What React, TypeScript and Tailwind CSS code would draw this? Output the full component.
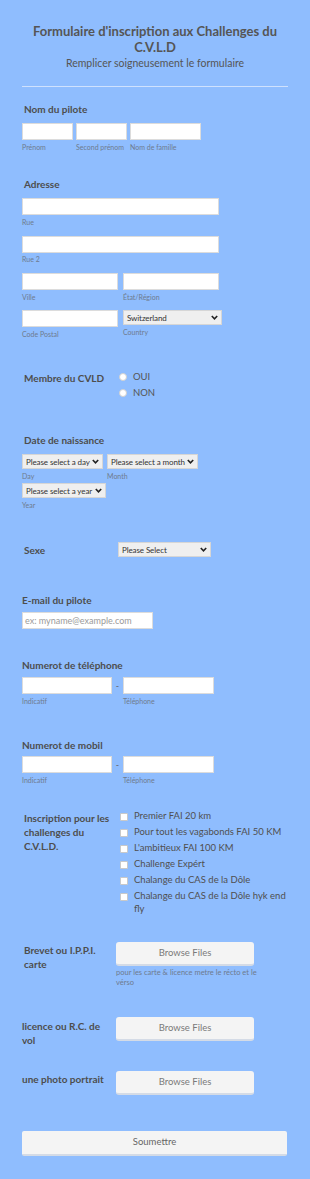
import React from "react";

const F = { fontFamily: "Lato, 'Open Sans', sans-serif" };

function Chevron() {
  return (
    <svg width="7" height="5" viewBox="0 0 7 5" className="shrink-0">
      <path d="M0.8 1 L3.5 3.8 L6.2 1" fill="none" stroke="#222" strokeWidth="1.6" />
    </svg>
  );
}

function Input({ w, placeholder }: { w: string; placeholder?: string }) {
  return (
    <div className={`${w} h-[17px] bg-white border border-[#dcdcdc] flex items-center px-[2px] text-[9px] text-[#9a9a9a]`}>
      {placeholder}
    </div>
  );
}

function Select({ w, text, h = "h-[15px]" }: { w: string; text: string; h?: string }) {
  return (
    <div className={`${w} ${h} bg-[#efefef] border border-[#d6d6d6] flex items-center justify-between gap-[2px] pl-[3px] pr-[3px] text-[8px] tracking-[-0.1px] text-[#333]`}>
      <span className="whitespace-nowrap">{text}</span>
      <Chevron />
    </div>
  );
}

function Sub({ children, className = "" }: { children: React.ReactNode; className?: string }) {
  return <div className={`text-[7px] leading-[10px] text-[#6e7b8e] ${className}`}>{children}</div>;
}

function Label({ children, className = "" }: { children: React.ReactNode; className?: string }) {
  return <div className={`text-[10px] leading-[14px] font-bold text-[#4d4d4d] ${className}`}>{children}</div>;
}

function Browse() {
  return (
    <div className="w-[138px] h-[24px] bg-[#f4f4f4] rounded-[3px] border-b-2 border-[#d4dbe6] flex items-center justify-center text-[9.5px] text-[#7a7a7a]">
      Browse Files
    </div>
  );
}

function Check({ children }: { children: React.ReactNode }) {
  return (
    <div className="flex items-start gap-[6px] text-[9.5px] leading-[12.5px] text-[#4f4f4f]">
      <div className="w-[8px] h-[8px] mt-[2.5px] bg-white border border-[#c9c9c9] rounded-[1px] shrink-0" />
      <div>{children}</div>
    </div>
  );
}

export default function App() {
  return (
    <div style={F} className="w-[310px] min-h-[1179px] bg-[#8fbdfe] px-[22px] pt-[23px] pb-[23px]">
      <div className="text-center text-[#555] font-bold text-[13px] leading-[16px]">
        Formulaire d'inscription aux Challenges du
        <br />
        C.V.L.D
      </div>
      <div className="text-center text-[#555] text-[10.5px] leading-[12px] mt-[2px]">Remplicer soigneusement le formulaire</div>
      <div className="h-px bg-[#cfe1fd] mt-[17px]" />

      {/* Nom du pilote */}
      <Label className="mt-[15px] ml-[2px]">Nom du pilote</Label>
      <div className="flex gap-[3px] mt-[7px]">
        <div>
          <Input w="w-[51px]" />
          <Sub className="mt-[2px]">Prénom</Sub>
        </div>
        <div>
          <Input w="w-[51px]" />
          <Sub className="mt-[2px]">Second prénom</Sub>
        </div>
        <div>
          <Input w="w-[71px]" />
          <Sub className="mt-[2px]">Nom de famille</Sub>
        </div>
      </div>

      {/* Adresse */}
      <Label className="mt-[25px] ml-[2px]">Adresse</Label>
      <div className="mt-[7px]">
        <Input w="w-[197px]" />
        <Sub className="mt-[2px]">Rue</Sub>
      </div>
      <div className="mt-[9px]">
        <Input w="w-[197px]" />
        <Sub className="mt-[1px]">Rue 2</Sub>
      </div>
      <div className="flex gap-[5px] mt-[9px]">
        <div>
          <Input w="w-[96px]" />
          <Sub className="mt-[2px]">Ville</Sub>
        </div>
        <div>
          <Input w="w-[96px]" />
          <Sub className="mt-[2px]">État/Région</Sub>
        </div>
      </div>
      <div className="flex gap-[5px] mt-[8px]">
        <div>
          <Input w="w-[96px]" />
          <Sub className="mt-[2px]">Code Postal</Sub>
        </div>
        <div>
          <Select w="w-[99px]" text="Switzerland" />
          <Sub className="mt-[2px]">Country</Sub>
        </div>
      </div>

      {/* Membre */}
      <div className="flex mt-[31px]">
        <Label className="w-[95px] ml-[2px] mt-[1px]">Membre du CVLD</Label>
        <div className="flex flex-col gap-[3px] text-[9.5px] leading-[13px] text-[#555]">
          <div className="flex items-center gap-[6px]">
            <div className="w-[8px] h-[8px] rounded-full bg-white border border-[#d0d0d0]" />
            OUI
          </div>
          <div className="flex items-center gap-[6px]">
            <div className="w-[8px] h-[8px] rounded-full bg-white border border-[#d0d0d0]" />
            NON
          </div>
        </div>
      </div>

      {/* Date */}
      <Label className="mt-[34px] ml-[2px]">Date de naissance</Label>
      <div className="flex gap-[4px] mt-[7px]">
        <div>
          <Select w="w-[81px]" text="Please select a day" />
          <Sub className="mt-[2px]">Day</Sub>
        </div>
        <div>
          <Select w="w-[91px]" text="Please select a month" />
          <Sub className="mt-[2px]">Month</Sub>
        </div>
      </div>
      <div className="mt-[2px]">
        <Select w="w-[84px]" text="Please select a year" />
        <Sub className="mt-[2px]">Year</Sub>
      </div>

      {/* Sexe */}
      <div className="flex items-center mt-[32px]">
        <Label className="w-[94px] ml-[2px]">Sexe</Label>
        <Select w="w-[93px]" text="Please Select" />
      </div>

      {/* Email */}
      <Label className="mt-[36px]">E-mail du pilote</Label>
      <div className="mt-[5px]">
        <Input w="w-[131px]" placeholder="ex: myname@example.com" />
      </div>

      {/* Téléphone */}
      <Label className="mt-[29px]">Numerot de téléphone</Label>
      <div className="flex items-start mt-[5px]">
        <div>
          <Input w="w-[90px]" />
          <Sub className="mt-[2px]">Indicatif</Sub>
        </div>
        <div className="w-[11px] text-center text-[9px] leading-[17px] text-[#666]">-</div>
        <div>
          <Input w="w-[91px]" />
          <Sub className="mt-[2px]">Téléphone</Sub>
        </div>
      </div>

      {/* Mobil */}
      <Label className="mt-[32px]">Numerot de mobil</Label>
      <div className="flex items-start mt-[4px]">
        <div>
          <Input w="w-[90px]" />
          <Sub className="mt-[2px]">Indicatif</Sub>
        </div>
        <div className="w-[11px] text-center text-[9px] leading-[17px] text-[#666]">-</div>
        <div>
          <Input w="w-[91px]" />
          <Sub className="mt-[2px]">Téléphone</Sub>
        </div>
      </div>

      {/* Inscription */}
      <div className="flex mt-[25px]">
        <Label className="w-[96px] ml-[2px] leading-[12.5px] mt-[1px]">
          Inscription pour les challenges du C.V.L.D.
        </Label>
        <div className="flex flex-col gap-[3.5px] w-[166px]">
          <Check>Premier FAI 20 km</Check>
          <Check>Pour tout les vagabonds FAI 50 KM</Check>
          <Check>L'ambitieux FAI 100 KM</Check>
          <Check>Challenge Expért</Check>
          <Check>Chalange du CAS de la Dôle</Check>
          <Check>Chalange du CAS de la Dôle hyk end fly</Check>
        </div>
      </div>

      {/* Brevet */}
      <div className="flex mt-[27px]">
        <Label className="w-[92px] ml-[2px] leading-[13px] mt-[1px]">Brevet ou I.P.P.I. carte</Label>
        <div>
          <Browse />
          <div className="text-[7.5px] leading-[10px] text-[#6e7b8e] mt-[2px] w-[142px]">
            pour les carte &amp; licence metre le récto et le vérso
          </div>
        </div>
      </div>

      <div className="flex mt-[29px]">
        <Label className="w-[86px] mr-[8px] leading-[12.5px] mt-[2px]">licence ou R.C. de vol</Label>
        <Browse />
      </div>

      <div className="flex mt-[24px]">
        <Label className="w-[94px] leading-[13px] mt-[1px]">une photo portrait</Label>
        <Browse />
      </div>

      <div className="mt-[36px] w-[265px] h-[25px] bg-[#f4f4f4] rounded-[2px] border-b-2 border-[#d4dbe6] flex items-center justify-center text-[9.5px] text-[#666]">
        Soumettre
      </div>
    </div>
  );
}
